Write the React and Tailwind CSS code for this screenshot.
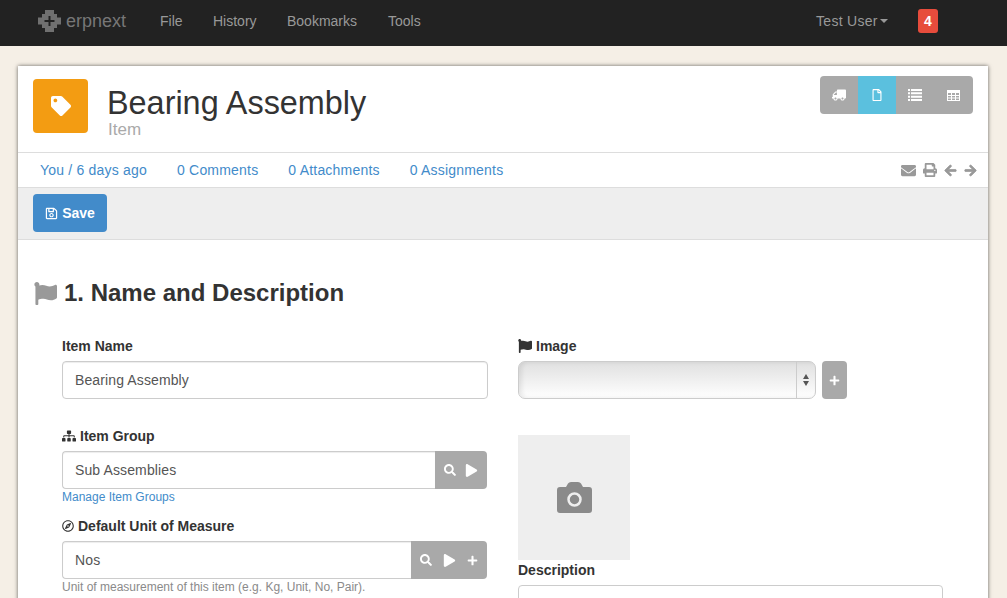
import React from 'react';
import {
  FaTruck, FaRegFile, FaEnvelope, FaPrint, FaArrowLeft, FaArrowRight,
  FaTag, FaFlag, FaSitemap, FaRegCompass, FaSearch, FaPlay, FaPlus, FaRegSave,
} from 'react-icons/fa';

const sans = 'font-["Liberation_Sans",Arial,sans-serif]';

const Logo = () => (
  <svg width="23" height="22" viewBox="0 0 23 22" className="mr-[5px]">
    <path fill="#707070" d="M7 0h9v4h3v3.500h4v7h-4V18h-3v4H7v-4H4v-3.500H0v-7h4V4h3z" />
    <path fill="#222" d="M10.500 6h2v4h4v2h-4v4h-2v-4h-4v-2h4z" />
  </svg>
);

const CameraIcon = () => (
  <svg width="35" height="31" viewBox="0 0 35 31">
    <path fill="#8a8a8a" d="M3 5h6l2-3.500Q12 0 14 0h7q2 0 3 1.500L26 5h6q3 0 3 3v20q0 3-3 3H3q-3 0-3-3V8q0-3 3-3z" />
    <circle cx="17.500" cy="17.500" r="6" fill="none" stroke="#eee" strokeWidth="2.500" />
  </svg>
);

const ListIcon = () => (
  <svg width="14" height="12" viewBox="0 0 14 12" fill="#fff">
    <path d="M0 0h2v2H0zM3 0h11v2H3zM0 3.300h2v2H0zM3 3.300h11v2H3zM0 6.700h2v2H0zM3 6.700h11v2H3zM0 10h2v2H0zM3 10h11v2H3z" />
  </svg>
);

const TableIcon = () => (
  <svg width="13" height="11" viewBox="0 0 13 11">
    <path fill="#fff" fillRule="evenodd" d="M0 0h13v11H0zM1 3v2h3V3zm4 0v2h3V3zm4 0v2h3V3zM1 6v1.500h3V6zm4 0v1.500h3V6zm4 0v1.500h3V6zM1 8.500V10h3V8.500zm4 0V10h3V8.500zm4 0V10h3V8.500z" />
  </svg>
);

const NavLink = ({ children, className = '' }) => (
  <span className={`text-[14px] text-[#999] ${className}`}>{children}</span>
);

const ViewButton = ({ active, wide, children }) => (
  <div className={`${wide ? 'w-[39px]' : 'w-[38px]'} h-full flex items-center justify-center text-white ${active ? 'bg-[#5bc0de]' : ''}`}>
    {children}
  </div>
);

const Label = ({ icon, children }) => (
  <div className="flex items-center gap-[4px] h-[20px] text-[14px] font-bold text-[#333]">
    {icon}
    <span>{children}</span>
  </div>
);

const LinkField = ({ value, buttons, inputWidth }) => (
  <div className="flex h-[38px] mt-[5px] w-[425px]">
    <div className={`${inputWidth} flex items-center pl-[12px] text-[14px] tracking-[0.12px] text-[#555] border border-[#ccc] border-r-0 rounded-l-[4px] shadow-[inset_0_1px_1px_rgba(0,0,0,0.075)]`}>
      {value}
    </div>
    <div className="flex-1 flex items-center justify-around px-[4px] bg-[#a9a9a9] text-white rounded-r-[4px]">
      {buttons}
    </div>
  </div>
);

export default function App() {
  return (
    <div className={`${sans} h-screen overflow-hidden bg-[#f5efe6]`}>
      <div className="h-[46px] bg-[#222] flex items-center pl-[38px] pb-[4px]">
        <Logo />
        <span className="text-[18px] text-[#777] w-[94px]">erpnext</span>
        <NavLink className="w-[53px]">File</NavLink>
        <NavLink className="w-[74px]">History</NavLink>
        <NavLink className="w-[101px]">Bookmarks</NavLink>
        <NavLink className="w-[428px]">Tools</NavLink>
        <NavLink className="flex items-center w-[102px] tracking-[0.3px]">
          Test User
          <span className="ml-[2px] border-x-[4px] border-x-transparent border-t-[4px] border-t-[#999]" />
        </NavLink>
        <span className="w-[20px] h-[24px] bg-[#e74c3c] rounded-[3px] text-white text-[14px] font-bold flex items-center justify-center">4</span>
      </div>

      <div className="mt-[20px] ml-[18px] w-[970px] h-[600px] bg-white shadow-[0_0_4px_rgba(0,0,0,0.6)]">
        <div className="relative h-[87px] border-b border-[#ddd] flex pl-[15px] pt-[13px]">
          <div className="w-[55px] h-[54px] bg-[#f39c12] rounded-[4px] flex items-center justify-center text-white">
            <FaTag size={20} />
          </div>
          <div className="ml-[19px]">
            <div className="text-[32.4px] leading-[36px] mt-[6px] text-[#333]">Bearing Assembly</div>
            <div className="text-[17px] leading-[18px] text-[#aaa] ml-[1px]">Item</div>
          </div>
          <div className="absolute right-[15px] top-[10px] flex h-[38px] bg-[#a9a9a9] rounded-[4px] overflow-hidden">
            <ViewButton><FaTruck size={14} className="-scale-x-100" /></ViewButton>
            <ViewButton active><FaRegFile size={12} /></ViewButton>
            <ViewButton><ListIcon /></ViewButton>
            <ViewButton wide><TableIcon /></ViewButton>
          </div>
        </div>

        <div className="h-[35px] border-b border-[#ddd] flex items-center pl-[22px] pr-[11px] text-[14px] tracking-[0.2px] text-[#428bca] gap-[30px]">
          <span>You / 6 days ago</span>
          <span>0 Comments</span>
          <span>0 Attachments</span>
          <span>0 Assignments</span>
          <div className="ml-auto flex items-center gap-[7px] text-[#999]">
            <FaEnvelope size={15} />
            <FaPrint size={14} />
            <FaArrowLeft size={13} stroke="currentColor" strokeWidth={30} />
            <FaArrowRight size={13} stroke="currentColor" strokeWidth={30} />
          </div>
        </div>

        <div className="h-[52px] bg-[#eee] border-b border-[#ddd] flex items-center pl-[15px] pb-[1px]">
          <div className="w-[74px] h-[38px] bg-[#428bca] rounded-[4px] flex items-center justify-center gap-[4px] text-white text-[14px] font-bold">
            <FaRegSave size={13} />
            <span>Save</span>
          </div>
        </div>

        <div className="flex items-center gap-[7px] mt-[36px] pl-[16px] h-[34px]">
          <FaFlag size={23} className="text-[#999]" />
          <span className="text-[24px] font-bold text-[#333]">1. Name and Description</span>
        </div>

        <div className="flex mt-[26px] pl-[44px] gap-[30px]">
          <div className="w-[426px]">
            <Label>Item Name</Label>
            <div className="h-[38px] mt-[5px] flex items-center pl-[12px] text-[14px] tracking-[0.12px] text-[#555] border border-[#ccc] rounded-[4px] shadow-[inset_0_1px_1px_rgba(0,0,0,0.075)]">
              Bearing Assembly
            </div>

            <div className="mt-[27px]">
              <Label icon={<FaSitemap size={14} />}>Item Group</Label>
              <LinkField
                value="Sub Assemblies"
                inputWidth="w-[373px]"
                buttons={<><FaSearch size={12} /><FaPlay size={13} /></>}
              />
              <div className="text-[12px] leading-[16px] text-[#428bca]">Manage Item Groups</div>
            </div>

            <div className="mt-[11px]">
              <Label icon={<FaRegCompass size={12} />}>Default Unit of Measure</Label>
              <LinkField
                value="Nos"
                inputWidth="w-[349px]"
                buttons={<><FaSearch size={12} /><FaPlay size={13} /><FaPlus size={11} /></>}
              />
              <div className="text-[12px] leading-[16px] text-[#8a8a8a]">Unit of measurement of this item (e.g. Kg, Unit, No, Pair).</div>
            </div>
          </div>

          <div className="w-[425px]">
            <Label icon={<FaFlag size={14} />}>Image</Label>
            <div className="flex gap-[6px] mt-[5px]">
              <div className="w-[298px] h-[38px] flex rounded-[7px] border border-[#ccc] overflow-hidden bg-gradient-to-b from-[#e0e0e0] to-white shadow-[inset_3px_0_4px_rgba(0,0,0,0.08)]">
                <div className="flex-1" />
                <div className="w-[19px] border-l border-[#ccc] flex flex-col items-center justify-center gap-[2px]">
                  <span className="border-x-[3px] border-x-transparent border-b-[5px] border-b-[#555]" />
                  <span className="border-x-[3px] border-x-transparent border-t-[5px] border-t-[#555]" />
                </div>
              </div>
              <div className="w-[25px] h-[38px] bg-[#a9a9a9] rounded-[4px] flex items-center justify-center text-white">
                <FaPlus size={11} />
              </div>
            </div>
            <div className="mt-[36px] w-[112px] h-[125px] bg-[#eee] flex items-center justify-center">
              <CameraIcon />
            </div>
            <Label>Description</Label>
            <div className="h-[60px] mt-[5px] border border-[#ccc] rounded-[4px]" />
          </div>
        </div>
      </div>
    </div>
  );
}
